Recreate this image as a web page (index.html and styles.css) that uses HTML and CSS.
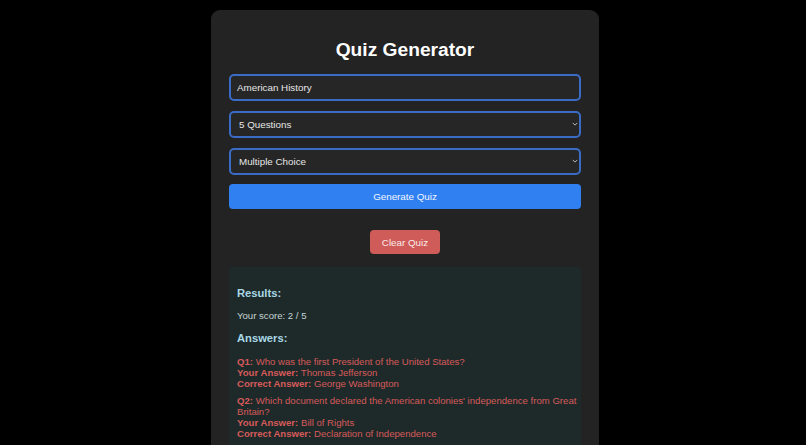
FILE: index.html
```html
<!DOCTYPE html>
<html lang="en">
<head>
  <meta charset="UTF-8">
  <meta name="viewport" content="width=device-width, initial-scale=1.0">
  <title>Quiz Generator</title>
  <link rel="stylesheet" href="styles.css">
</head>
<body>
  <div class="container">
    <h1>Quiz Generator</h1>

    <form class="quiz-form">
      <input type="text" class="field" value="American History">

      <div class="select-wrap">
        <select class="field">
          <option>5 Questions</option>
          <option>10 Questions</option>
        </select>
        <svg class="chevron" viewBox="0 0 8 5"><path d="M1 1l3 3 3-3"/></svg>
      </div>

      <div class="select-wrap">
        <select class="field">
          <option>Multiple Choice</option>
          <option>True / False</option>
        </select>
        <svg class="chevron" viewBox="0 0 8 5"><path d="M1 1l3 3 3-3"/></svg>
      </div>

      <button type="button" class="generate-button">Generate Quiz</button>
    </form>

    <div class="actions">
      <button type="button" class="clear-button">Clear Quiz</button>
    </div>

    <div class="results">
      <h3>Results:</h3>
      <p class="score">Your score: 2 / 5</p>

      <h3>Answers:</h3>
      <div class="answer">
        <strong>Q1:</strong> Who was the first President of the United States?<br>
        <strong>Your Answer:</strong> Thomas Jefferson<br>
        <strong>Correct Answer:</strong> George Washington
      </div>
      <div class="answer">
        <strong>Q2:</strong> Which document declared the American colonies' independence from Great Britain?<br>
        <strong>Your Answer:</strong> Bill of Rights<br>
        <strong>Correct Answer:</strong> Declaration of Independence
      </div>
    </div>
  </div>
</body>
</html>
```

FILE: styles.css
```css
* {
  margin: 0;
  padding: 0;
  box-sizing: border-box;
}

body {
  font-family: "Liberation Sans", Arial, sans-serif;
  font-size: 9.6px;
  background: #000;
  color: #e6e6e6;
  height: 100vh;
  overflow: hidden;
  padding: 10px 0 0 4px;
}

.container {
  width: 388px;
  margin: 0 auto;
  padding: 18px 18px 40px;
  background: #232323;
  border-radius: 9px;
}

h1 {
  font-size: 19.2px;
  line-height: 22px;
  font-weight: 700;
  text-align: center;
  color: #fff;
  margin: 11px 0 13px;
}

.quiz-form {
  display: flex;
  flex-direction: column;
  gap: 10px;
}

.field {
  width: 100%;
  height: 27px;
  padding: 0 6px;
  font-family: inherit;
  font-size: 9.8px;
  color: #e6e6e6;
  background: #262626;
  border: 2px solid #3a6cc6;
  border-radius: 5px;
  outline: none;
}

select.field {
  appearance: none;
  -webkit-appearance: none;
  padding-left: 8px;
}

.select-wrap {
  position: relative;
}

.chevron {
  position: absolute;
  right: 3px;
  top: 11px;
  width: 6px;
  height: 4px;
  fill: none;
  stroke: #bbb;
  stroke-width: 1.3;
  pointer-events: none;
}

.generate-button {
  height: 25px;
  margin-top: -1px;
  font-family: inherit;
  font-size: 9.8px;
  color: #f2f6ff;
  background: #3080f2;
  border: none;
  border-radius: 4px;
  cursor: pointer;
}

.actions {
  display: flex;
  justify-content: center;
  margin-top: 21px;
}

.clear-button {
  width: 70px;
  height: 24px;
  font-family: inherit;
  font-size: 9.8px;
  color: #fbeaea;
  background: #cf5c58;
  border: none;
  border-radius: 4px;
  cursor: pointer;
}

.results {
  margin-top: 13px;
  padding: 10px 2px 20px 8px;
  background: #1e2a2a;
  border-radius: 4px;
}

.results h3 {
  font-size: 11.2px;
  line-height: 13px;
  color: #a9d8e6;
  margin: 10px 0 10px;
}

.results h3 + .answer {
  margin-top: 11px;
}

.score {
  line-height: 11px;
  color: #c4d4d4;
  margin-bottom: 11px;
}

.answer {
  line-height: 11px;
  color: #d65a5a;
  margin-bottom: 6px;
}

.answer strong {
  font-weight: 700;
}
```
